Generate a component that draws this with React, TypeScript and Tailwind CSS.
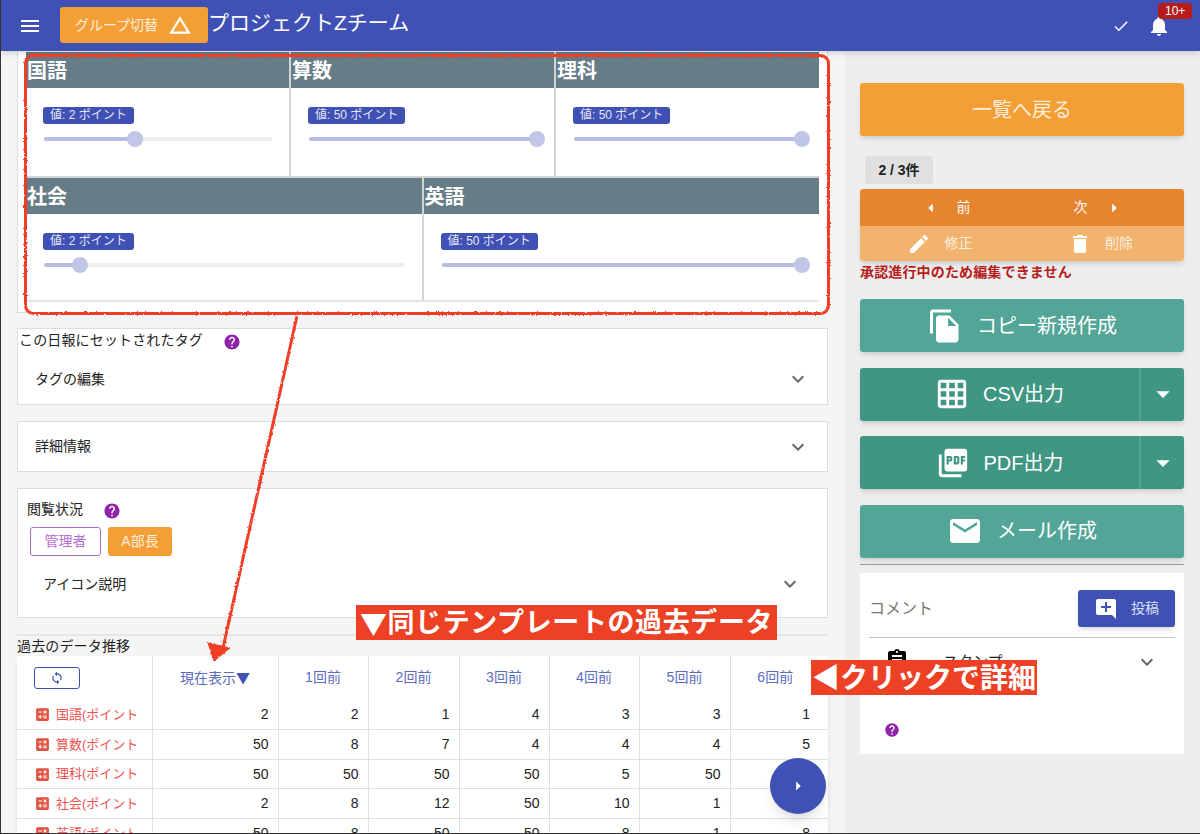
import {
  MdAddComment,
  MdArrowDropDown,
  MdArrowLeft,
  MdArrowRight,
  MdAssignment,
  MdCalculate,
  MdChangeHistory,
  MdCheck,
  MdDelete,
  MdEdit,
  MdEmail,
  MdExpandMore,
  MdFileCopy,
  MdGridOn,
  MdHelp,
  MdMenu,
  MdNotifications,
  MdPictureAsPdf,
  MdSync,
} from "react-icons/md";

const rows = [
  { name: "国語(ポイント", values: ["2", "2", "1", "4", "3", "3", "1"] },
  { name: "算数(ポイント", values: ["50", "8", "7", "4", "4", "4", "5"] },
  { name: "理科(ポイント", values: ["50", "50", "50", "50", "5", "50", "5"] },
  { name: "社会(ポイント", values: ["2", "8", "12", "50", "10", "1", "8"] },
  { name: "英語(ポイント", values: ["50", "8", "50", "50", "8", "1", "8"] },
];

const heads = ["1回前", "2回前", "3回前", "4回前", "5回前", "6回前"];

function SliderCell({ title, value, percent, last }: { title: string; value: string; percent: number; last?: boolean }) {
  return (
    <div className={`flex-1 bg-white ${last ? "" : "border-r-2 border-[#d4d4d4]"}`}>
      <div className="h-[36px] bg-[#667c87] pl-[1px] text-[20px] leading-[39px] font-bold text-white">{title}</div>
      <div className="pl-[17px] pr-[17px] pt-[19px]">
        <span className="block w-fit rounded-[3px] bg-[#3f51b5] px-[7px] text-[12px] leading-[17px] text-[#e4e6f6]">
          値: {value} ポイント
        </span>
        <div className="relative ml-[1px] mt-[13px] h-[4px] rounded-full bg-[#eeeeee]">
          <div className="h-full rounded-full bg-[#b7bde2]" style={{ width: `${percent}%` }} />
          <div
            className="absolute top-[-6px] ml-[-8px] h-[16px] w-[16px] rounded-full bg-[#c2c6e6]"
            style={{ left: `${percent}%` }}
          />
        </div>
      </div>
    </div>
  );
}

function WideButton({ icon, label, dark, menu }: { icon: React.ReactNode; label: string; dark?: boolean; menu?: boolean }) {
  return (
    <div className={`flex h-[53px] rounded-[3px] text-white shadow-md ${dark ? "bg-[#3f9682]" : "bg-[#52a597]"}`}>
      <div className="flex flex-1 items-center justify-center gap-[14px] text-[20px]">
        {icon}
        <span>{label}</span>
      </div>
      {menu && (
        <div className="flex w-[45px] items-center justify-center border-l-2 border-[#52a597]">
          <MdArrowDropDown size={32} />
        </div>
      )}
    </div>
  );
}

export default function App() {
  return (
    <div className="relative flex h-[834px] flex-col overflow-hidden border-b border-l border-[#333333] bg-[#f5f5f5] font-['Liberation_Sans','Noto_Sans_CJK_JP',sans-serif] text-[14px] text-[#222222]">
      <header className="z-10 flex h-[51px] shrink-0 items-center bg-[#3f51b5] text-white shadow-md">
        <MdMenu size={24} className="ml-[17px]" />
        <div className="ml-[18px] mt-[7px] flex h-[36px] w-[148px] items-center justify-center gap-[9px] self-start rounded-[3px] bg-[#f49f36] text-[14px] text-[#fdeedd]">
          グループ切替
          <MdChangeHistory size={26} className="text-white" />
        </div>
        <div className="mb-[5px] text-[21px]">プロジェクトZチーム</div>
        <div className="relative ml-auto mr-[29px] flex items-center gap-[17px]">
          <MdCheck size={18} />
          <MdNotifications size={24} />
          <span className="absolute left-[46px] top-[-11px] rounded-[4px] bg-[#b71c1c] px-[7px] text-[12px] leading-[16px]">10+</span>
        </div>
      </header>

      <div className="flex min-h-0 flex-1">
        <main className="w-[844px] shrink-0 pl-[16px] pr-[17px]">
          <section className="h-[262px] border-x border-b border-[#dddddd] bg-white px-[8px] pt-[1px]">
            <div className="flex h-[126px] border-b-2 border-[#d4d4d4]">
              <SliderCell title="国語" value="2" percent={40} />
              <SliderCell title="算数" value="50" percent={100} />
              <SliderCell title="理科" value="50" percent={100} last />
            </div>
            <div className="flex h-[124px] border-b-2 border-[#e4e4e4]">
              <SliderCell title="社会" value="2" percent={10} />
              <SliderCell title="英語" value="50" percent={100} last />
            </div>
          </section>

          <section className="mt-[15px] h-[77px] border border-[#dddddd] bg-white">
            <div className="flex items-center pl-[1px] pt-[1px] tracking-[0.15px]">
              この日報にセットされたタグ
              <MdHelp size={18} className="ml-[20px] mt-[3px] text-[#8e24aa]" />
            </div>
            <div className="flex items-center justify-between pl-[17px] pr-[17px] pt-[16px]">
              タグの編集
              <MdExpandMore size={24} className="text-[#666666]" />
            </div>
          </section>

          <section className="mt-[16px] flex h-[51px] items-center justify-between border border-[#dddddd] bg-white pl-[17px] pr-[17px]">
            詳細情報
            <MdExpandMore size={24} className="text-[#666666]" />
          </section>

          <section className="mt-[16px] h-[130px] border border-[#dddddd] bg-white pl-[9px] pr-[25px] pt-[10px]">
            <div className="flex items-center">
              閲覧状況
              <MdHelp size={18} className="ml-[20px] mt-[2px] text-[#8e24aa]" />
            </div>
            <div className="ml-[3px] mt-[7px] flex gap-[7px]">
              <span className="flex h-[29px] w-[71px] items-center justify-center rounded-[3px] border border-[#ab6fc9] text-[#b56fd0]">管理者</span>
              <span className="flex h-[29px] w-[64px] items-center justify-center rounded-[3px] bg-[#f49f36] text-[#fdeedd]">A部長</span>
            </div>
            <div className="mt-[16px] flex items-center justify-between pl-[16px]">
              アイコン説明
              <MdExpandMore size={24} className="text-[#666666]" />
            </div>
          </section>

          <div className="mt-[16px] h-[2px] bg-[#e6e6e6]" />
          <div className="leading-[20px] tracking-[0.15px]">過去のデータ推移</div>

          <table className="w-full table-fixed border-collapse bg-white shadow-md">
            <colgroup>
              <col className="w-[135px]" />
              <col className="w-[126px]" />
              <col className="w-[90px]" />
              <col className="w-[91px]" />
              <col className="w-[90px]" />
              <col className="w-[90px]" />
              <col className="w-[91px]" />
              <col />
            </colgroup>
            <thead>
              <tr className="h-[44px]">
                <th className="border-r border-[#e0e0e0] p-0 pl-[17px]">
                  <div className="flex h-[22px] w-[46px] items-center justify-center rounded-[3px] border border-[#3f51b5] text-[#3f51b5]">
                    <MdSync size={14} />
                  </div>
                </th>
                <th className="border-r border-[#e0e0e0] p-0 pb-[1px] text-center font-normal text-[#5c6bc0]">
                  現在表示<span className="font-['Noto_Sans_CJK_JP',sans-serif] text-[#3f51b5]">▼</span>
                </th>
                {heads.map((h) => (
                  <th key={h} className="border-r border-[#e0e0e0] p-0 pb-[1px] text-center font-normal text-[#5c6bc0] last:border-r-0 last:pr-[8px]">
                    {h}
                  </th>
                ))}
              </tr>
            </thead>
            <tbody>
              {rows.map((r) => (
                <tr key={r.name} className="h-[29.67px] border-b border-[#e0e0e0]">
                  <td className="border-r border-[#e0e0e0] p-0 pl-[17px]">
                    <div className="flex items-center gap-[5px] whitespace-nowrap text-[13px] text-[#ef5350]">
                      <MdCalculate size={17} className="text-[#e25241]" />
                      {r.name}
                    </div>
                  </td>
                  {r.values.map((v, i) => (
                    <td key={i} className="border-r border-[#e0e0e0] p-0 pr-[9px] text-right last:border-r-0 last:pr-[18px]">
                      {v}
                    </td>
                  ))}
                </tr>
              ))}
            </tbody>
          </table>
        </main>

        <aside className="flex-1 bg-[#eeeeee] pl-[15px] pr-[16px] pt-[32px]">
          <div className="flex h-[53px] items-center justify-center rounded-[3px] bg-[#f49f36] text-[20px] text-[#fdeedd] shadow-md">一覧へ戻る</div>
          <div className="ml-[5px] mt-[20px] flex h-[28px] w-[68px] items-center justify-center rounded-[3px] bg-[#e0e0e0] font-bold">2 / 3件</div>
          <div className="mt-[5px] rounded-[3px] shadow-md">
            <div className="flex h-[37px] rounded-t-[3px] bg-[#e6852f] text-white">
              <div className="flex flex-1 items-center justify-center gap-[15px] pl-[8px]">
                <MdArrowLeft size={22} />
                前
              </div>
              <div className="flex flex-1 items-center justify-center gap-[15px] pr-[8px]">
                次
                <MdArrowRight size={22} />
              </div>
            </div>
            <div className="flex h-[35px] rounded-b-[3px] bg-[#f2b36f] text-[#fdeedd]">
              <div className="flex flex-1 items-center justify-center gap-[14px] pr-[2px]">
                <MdEdit size={24} className="text-white" />
                修正
              </div>
              <div className="flex flex-1 items-center justify-center gap-[13px] pr-[4px]">
                <MdDelete size={24} className="text-white" />
                削除
              </div>
            </div>
          </div>
          <div className="mt-[1px] font-bold leading-[20px] tracking-[0.15px] text-[#b71c1c]">承認進行中のため編集できません</div>

          <div className="mt-[17px] flex flex-col gap-[15.6px]">
            <WideButton icon={<MdFileCopy size={36} />} label="コピー新規作成" />
            <WideButton icon={<MdGridOn size={34} />} label="CSV出力" dark menu />
            <WideButton icon={<MdPictureAsPdf size={34} />} label="PDF出力" dark menu />
            <WideButton icon={<MdEmail size={36} />} label="メール作成" />
          </div>

          <div className="mt-[6px] h-px bg-[#999999]" />

          <div className="mt-[8px] h-[181px] bg-white px-[9px]">
            <div className="flex h-[65px] items-center justify-between border-b border-[#c4c4c4] pt-[8px]">
              <span className="text-[16px] text-[#777777]">コメント</span>
              <div className="flex h-[37px] w-[97px] items-center justify-center gap-[13px] rounded-[3px] bg-[#3f51b5] text-[#dfe2f4] shadow-md">
                <MdAddComment size={24} className="text-white" />
                投稿
              </div>
            </div>
            <div className="flex items-start pl-[16px] pr-[16px] pt-[10px]">
              <MdAssignment size={24} className="text-black" />
              <span className="ml-[34px] mt-[3px] text-[15px]">スタンプ</span>
              <MdExpandMore size={24} className="ml-auto mt-[2px] text-[#666666]" />
            </div>
            <MdHelp size={16} className="ml-[15px] mt-[48px] text-[#8e24aa]" />
          </div>
        </aside>
      </div>

      {/* annotations laid over the screenshot */}
      <svg className="absolute left-0 top-0 z-20" width="1200" height="834" fill="none">
        <defs>
          <filter id="rough" x="0" y="0" width="100%" height="100%" filterUnits="userSpaceOnUse">
            <feTurbulence type="fractalNoise" baseFrequency="0.45" numOctaves="2" seed="3" />
            <feDisplacementMap in="SourceGraphic" scale="2.5" />
          </filter>
        </defs>
        <g filter="url(#rough)" stroke="#f03c28">
          <rect x="24.5" y="55.5" width="803" height="258" rx="8" strokeWidth="3" />
          <path d="M296 316 L222 648" strokeWidth="3" />
          <path d="M207 643 L229 648 L213 661 Z" fill="#f03c28" />
        </g>
      </svg>
      <div className="absolute left-[355px] top-[605px] z-20 flex h-[35px] w-[421px] items-center justify-center whitespace-nowrap bg-[#ec4124] pt-[2px] text-[27px] font-bold tracking-[0.6px] text-white">
        <span className="font-['Noto_Sans_CJK_JP',sans-serif]">▼</span>同じテンプレートの過去データ
      </div>
      <div className="absolute left-[810px] top-[660px] z-20 flex h-[35px] w-[226px] items-center justify-center whitespace-nowrap bg-[#ec4124] pt-[2px] text-[28px] font-bold text-white">
        ◀クリックで詳細
      </div>
      <div className="absolute left-[769px] top-[758px] z-20 flex h-[56px] w-[56px] items-center justify-center rounded-full bg-[#3f51b5] text-white shadow-lg">
        <MdArrowRight size={22} />
      </div>
    </div>
  );
}
